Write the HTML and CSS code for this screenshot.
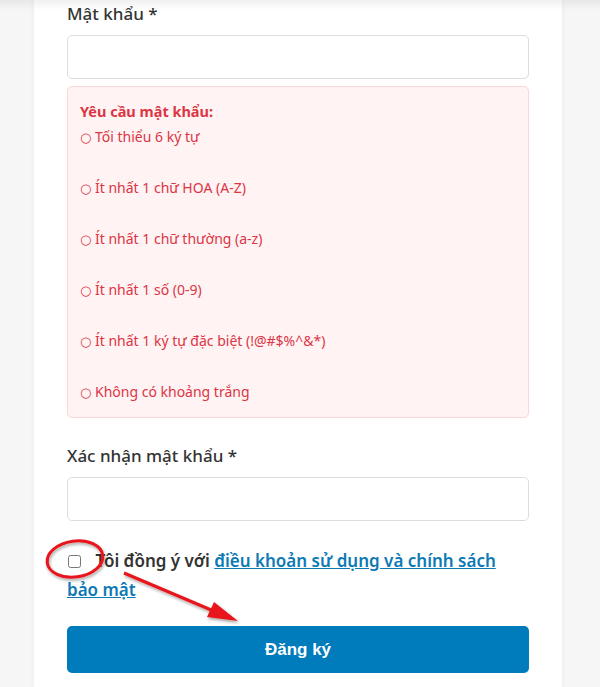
FILE: index.html
```html
<!DOCTYPE html>
<html lang="vi">
<head>
	<meta charset="UTF-8">
	<title>Đăng ký</title>
	<link rel="stylesheet" href="styles.css">
</head>
<body>
	<div class="top-shade"></div>
	<div class="page">
		<form class="card">
			<div class="field">
				<label for="pass">Mật khẩu *</label>
				<input type="password" id="pass" class="input">
			</div>
			<div class="rules">
				<strong>Yêu cầu mật khẩu:</strong>
				<ul>
					<li><span class="dot">○</span> Tối thiểu 6 ký tự</li>
					<li><span class="dot">○</span> Ít nhất 1 chữ HOA (A-Z)</li>
					<li><span class="dot">○</span> Ít nhất 1 chữ thường (a-z)</li>
					<li><span class="dot">○</span> Ít nhất 1 số (0-9)</li>
					<li><span class="dot">○</span> Ít nhất 1 ký tự đặc biệt (!@#$%^&amp;*)</li>
					<li><span class="dot">○</span> Không có khoảng trắng</li>
				</ul>
			</div>
			<div class="field confirm">
				<label for="pass2">Xác nhận mật khẩu *</label>
				<input type="password" id="pass2" class="input">
			</div>
			<label class="agree">
				<input type="checkbox">
				Tôi đồng ý với <a href="#">điều khoản sử dụng và chính sách bảo mật</a>
			</label>
			<button type="button" class="submit">Đăng ký</button>
		</form>
	</div>
	<svg class="marks" width="600" height="687" viewBox="0 0 600 687">
		<defs>
			<filter id="sh" x="-20%" y="-20%" width="140%" height="140%">
				<feDropShadow dx="1" dy="2" stdDeviation="1.5" flood-color="#000" flood-opacity="0.35"/>
			</filter>
		</defs>
		<g filter="url(#sh)" fill="none" stroke="#e8141a" stroke-width="3">
			<ellipse cx="75" cy="559" rx="28" ry="18" transform="rotate(-8 75 559)"/>
			<line x1="124" y1="573" x2="216" y2="612"/>
		</g>
		<polygon filter="url(#sh)" fill="#e8141a" points="238,621 207,617 214,602"/>
	</svg>
</body>
</html>
```

FILE: styles.css
```css
body{margin:0;background:#f6f6f6;font-family:"Noto Sans","Open Sans","Liberation Sans",sans-serif;color:#333;}
.top-shade{position:fixed;left:0;top:0;width:100%;height:10px;background:linear-gradient(rgba(0,0,0,.06),rgba(0,0,0,0));}
.page{padding-left:34px;}
.card{width:462px;padding:2px 33px 15px;background:#fff;box-shadow:0 0 6px rgba(0,0,0,.05);}
.field label{display:block;font-size:17px;line-height:24px;font-weight:500;}
.input{display:block;box-sizing:border-box;width:100%;height:44px;margin-top:9px;border:1px solid #ddd;border-radius:5px;background:#fff;}
.rules{margin-top:7px;padding:13px 12px 15px;background:#fff3f3;border:1px solid #fcd6d8;border-radius:5px;color:#dc3545;}
.rules strong{display:block;font-size:14.5px;line-height:22px;}
.rules ul{list-style:none;margin:5px 0 0;padding:0;}
.rules li{font-size:14px;line-height:20px;margin-bottom:31px;}
.rules li:last-child{margin-bottom:0;}
.rules .dot{font-family:"DejaVu Sans",sans-serif;font-size:13px;line-height:0;}
.confirm{margin-top:26px;}
.confirm .input{margin-top:9px;}
.agree{display:block;margin-top:25px;font-size:17px;line-height:29px;font-weight:600;}
.agree input{width:13px;height:13px;margin:0 10px 0 1px;vertical-align:-1px;}
.agree a{color:#0d79b5;}
.submit{display:block;width:100%;height:47px;margin-top:22px;border:none;border-radius:5px;background:#007bbb;color:#fff;font:bold 17px "Liberation Sans",Arial,sans-serif;}
.marks{position:absolute;left:0;top:0;pointer-events:none;}
```
